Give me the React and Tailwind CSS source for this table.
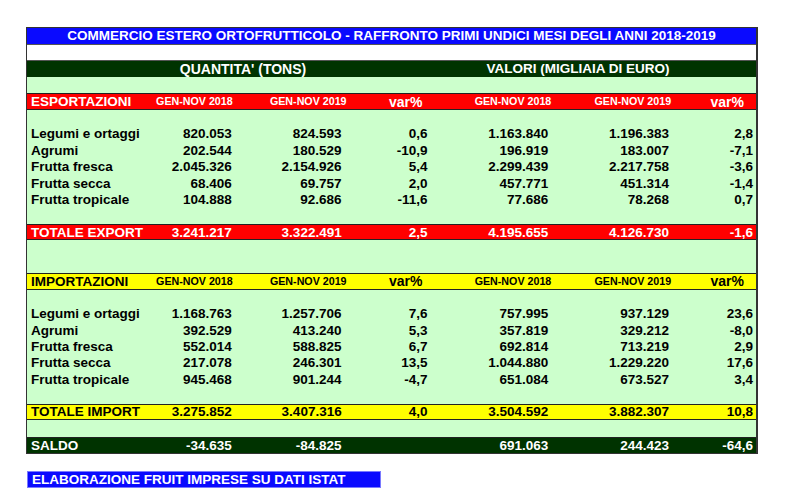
import React from 'react';

const exportRows = [
    ['Legumi e ortaggi', '820.053', '824.593', '0,6', '1.163.840', '1.196.383', '2,8'],
    ['Agrumi', '202.544', '180.529', '-10,9', '196.919', '183.007', '-7,1'],
    ['Frutta fresca', '2.045.326', '2.154.926', '5,4', '2.299.439', '2.217.758', '-3,6'],
    ['Frutta secca', '68.406', '69.757', '2,0', '457.771', '451.314', '-1,4'],
    ['Frutta tropicale', '104.888', '92.686', '-11,6', '77.686', '78.268', '0,7'],
];

const importRows = [
    ['Legumi e ortaggi', '1.168.763', '1.257.706', '7,6', '757.995', '937.129', '23,6'],
    ['Agrumi', '392.529', '413.240', '5,3', '357.819', '329.212', '-8,0'],
    ['Frutta fresca', '552.014', '588.825', '6,7', '692.814', '713.219', '2,9'],
    ['Frutta secca', '217.078', '246.301', '13,5', '1.044.880', '1.229.220', '17,6'],
    ['Frutta tropicale', '945.468', '901.244', '-4,7', '651.084', '673.527', '3,4'],
];

// column widths + right padding for values
const cols = ['w-[96px] pr-[4px]', 'w-[112px] pr-[6px]', 'w-[83px] pr-[3px]', 'w-[122px] pr-[4px]', 'w-[121px] pr-[4px]', 'w-[83px] pr-[3px]'];
const headCols = ['w-[96px] pr-[3px]', 'w-[112px] pr-[1px]', 'w-[83px] pr-[8px]', 'w-[122px] pr-[1px]', 'w-[121px] pr-[2px]', 'w-[83px] pr-[12px]'];

const Row = ({ className = 'bg-[#ccffcc]', children }) => (
    <div className={`flex h-[16.35px] items-center ${className}`}>{children}</div>
);

const DataRow = ({ cells, className, text = 'text-black' }) => (
    <Row className={className}>
        <div className={`w-[113px] pl-[4px] text-[13.5px] ${text} whitespace-nowrap`}>{cells[0]}</div>
        {cells.slice(1).map((c, i) => (
            <div key={i} className={`${cols[i]} text-right text-[13.5px] ${text}`}>{c}</div>
        ))}
    </Row>
);

const SectionHead = ({ label, className, text }) => (
    <Row className={className}>
        <div className={`w-[113px] pl-[4px] text-[13.5px] ${text}`}>{label}</div>
        {['GEN-NOV 2018', 'GEN-NOV 2019', 'var%', 'GEN-NOV 2018', 'GEN-NOV 2019', 'var%'].map((h, i) => (
            <div key={i} className={`${headCols[i]} text-right ${h === 'var%' ? 'text-[14px]' : 'text-[10.7px]'} ${text}`}>{h}</div>
        ))}
    </Row>
);

const Blank = () => <Row />;

export default function App() {
    return (
        <div className="bg-white w-[800px] h-[500px] pt-[27px] pl-[26px] font-['Liberation_Sans',Arial,sans-serif] font-bold leading-none">
            <div className="w-[732px] border border-[#333] border-r-2">
                <Row className="bg-[#0a0aff] justify-center">
                    <span className="text-white text-[13.5px]">COMMERCIO ESTERO ORTOFRUTTICOLO - RAFFRONTO PRIMI UNDICI MESI DEGLI ANNI 2018-2019</span>
                </Row>
                <Row className="bg-white border-y border-[#555]" />
                <Row className="bg-[#003300]">
                    <div className="ml-[114px] w-[204px] text-center text-white text-[14px]">QUANTITA' (TONS)</div>
                    <div className="ml-[131px] w-[204px] text-center text-white text-[13.5px]">VALORI (MIGLIAIA DI EURO)</div>
                </Row>
                <Blank />
                <SectionHead label="ESPORTAZIONI" className="bg-[#ff0000] border-y border-[#222]" text="text-white" />
                <Blank />
                {exportRows.map((r) => <DataRow key={r[0]} cells={r} />)}
                <Blank />
                <DataRow cells={['TOTALE EXPORT', '3.241.217', '3.322.491', '2,5', '4.195.655', '4.126.730', '-1,6']} className="bg-[#ff0000] border-y border-[#222]" text="text-white" />
                <Blank />
                <Blank />
                <SectionHead label="IMPORTAZIONI" className="bg-[#ffff00] border-y border-[#222]" text="text-black" />
                <Blank />
                {importRows.map((r) => <DataRow key={r[0]} cells={r} />)}
                <Blank />
                <DataRow cells={['TOTALE IMPORT', '3.275.852', '3.407.316', '4,0', '3.504.592', '3.882.307', '10,8']} className="bg-[#ffff00] border-y border-[#222]" text="text-black" />
                <Blank />
                <DataRow cells={['SALDO', '-34.635', '-84.825', '', '691.063', '244.423', '-64,6']} className="bg-[#003300] border-t border-[#222]" text="text-white" />
            </div>
            <div className="mt-[17px] ml-[1px] w-[354px] h-[17px] bg-[#0a0aff] border border-[#7a7aff] flex items-center pl-[4px]">
                <span className="text-white text-[13.5px]">ELABORAZIONE FRUIT IMPRESE SU DATI ISTAT</span>
            </div>
        </div>
    );
}
